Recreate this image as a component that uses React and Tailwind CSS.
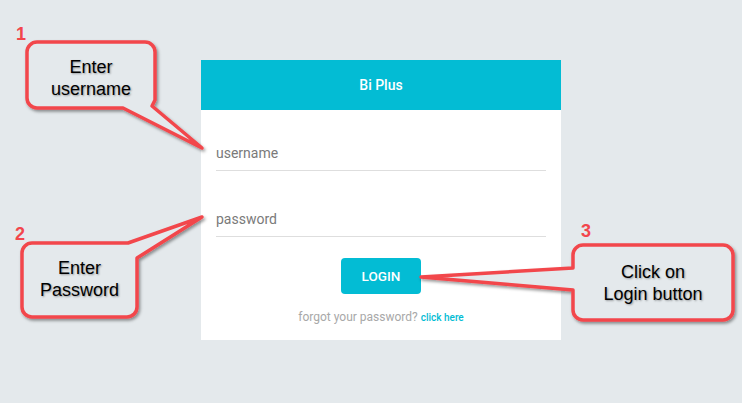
import React from "react";

const RED = "#f2464c";

function Callouts() {
  // annotation bubbles drawn over the page
  return (
    <svg
      className="absolute inset-0 pointer-events-none"
      width="742"
      height="403"
      viewBox="0 0 742 403"
    >
      <defs>
        <filter id="sh" x="-20%" y="-20%" width="140%" height="140%">
          <feDropShadow dx="1.5" dy="2" stdDeviation="1.5" floodColor="#000" floodOpacity="0.4" />
        </filter>
      </defs>
      <g fill="#e4e9ec" stroke={RED} strokeWidth="3.5" strokeLinejoin="round" filter="url(#sh)">
        <path d="M37 42 H145 A10 10 0 0 1 155 52 V100 L152 106 L202 148 L123 108 H37 A10 10 0 0 1 27 98 V52 A10 10 0 0 1 37 42 Z" />
        <path d="M32 243 H128 L202 217 L137 258 V307 A10 10 0 0 1 127 317 H32 A10 10 0 0 1 22 307 V253 A10 10 0 0 1 32 243 Z" />
        <path d="M583 245 H723 A10 10 0 0 1 733 255 V310 A10 10 0 0 1 723 320 H583 A10 10 0 0 1 573 310 V290 L421 277 L573 268 V255 A10 10 0 0 1 583 245 Z" />
      </g>
    </svg>
  );
}

function Bubble({ className, num, numClass, lines }) {
  return (
    <>
      <div
        className={`absolute text-[18px] font-bold leading-none text-[#f2464c] ${numClass}`}
        style={{ fontFamily: '"Liberation Sans", Arial, sans-serif' }}
      >
        {num}
      </div>
      <div
        className={`absolute flex flex-col items-center justify-center text-[18px] leading-[22px] text-black [text-shadow:1px_1px_2px_rgba(0,0,0,0.35)] ${className}`}
        style={{ fontFamily: '"Liberation Sans", Arial, sans-serif' }}
      >
        {lines.map((l) => (
          <span key={l}>{l}</span>
        ))}
      </div>
    </>
  );
}

export default function App() {
  return (
    <div
      className="relative w-[742px] h-[403px] overflow-hidden bg-[#e4e9ec]"
      style={{ fontFamily: "Roboto, sans-serif" }}
    >
      <div className="pt-[60px] pl-[201px]">
        <div className="w-[360px] h-[280px] bg-white flex flex-col">
          <div className="h-[50px] bg-[#03bcd4] flex items-center justify-center text-white text-[14px] font-medium">
            Bi Plus
          </div>
          <div className="px-[15px] pt-[27px] flex flex-col">
            <div className="h-[34px] flex items-center border-b border-[#dedede] text-[14px] text-[#7a7a7a]">
              username
            </div>
            <div className="mt-[32px] h-[34px] flex items-center border-b border-[#dedede] text-[14px] text-[#7a7a7a]">
              password
            </div>
            <div className="mt-[21px] flex justify-center">
              <button className="w-[80px] h-[36px] rounded-[4px] bg-[#03bcd4] text-white text-[13.5px] font-medium">
                LOGIN
              </button>
            </div>
            <div className="mt-[15px] text-center text-[12px] leading-4 text-[#a8a8a8]">
              forgot your password?{" "}
              <span className="text-[10px] font-medium text-[#03bcd4]">click here</span>
            </div>
          </div>
        </div>
      </div>

      <Callouts />
      <Bubble num="1" numClass="left-[16px] top-[25px]" className="left-[27px] top-[45px] w-[128px] h-[66px]" lines={["Enter", "username"]} />
      <Bubble num="2" numClass="left-[15px] top-[225px]" className="left-[22px] top-[242px] w-[115px] h-[74px]" lines={["Enter", "Password"]} />
      <Bubble num="3" numClass="left-[581px] top-[222px]" className="left-[573px] top-[245px] w-[160px] h-[75px]" lines={["Click on", "Login button"]} />
    </div>
  );
}
